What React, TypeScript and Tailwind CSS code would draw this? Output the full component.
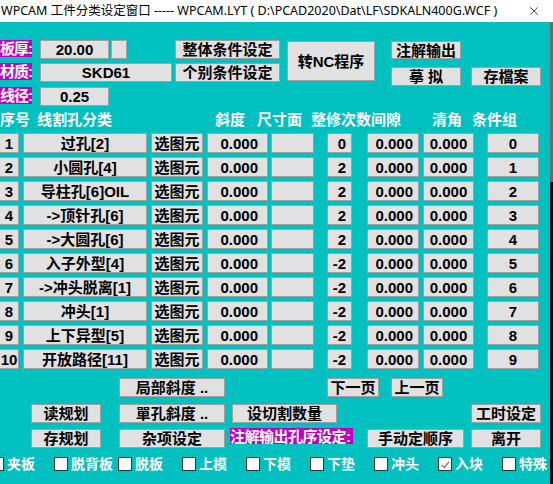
import { X } from 'lucide-react';

// WPCAM - 工件分类设定窗口 (classic Win32 dialog look)

const BOX = 'bg-[#e1e1e1] border border-[#a0a0a0] text-black font-bold flex items-center shrink-0 leading-none';
const LABEL = 'bg-[#c000c0] text-white font-bold flex items-center shrink-0 leading-none';

type Row = { no: number; name: string; k: number; grp: number };

const rows: Row[] = [
  { no: 1, name: '过孔[2]', k: 0, grp: 0 },
  { no: 2, name: '小圆孔[4]', k: 2, grp: 1 },
  { no: 3, name: '导柱孔[6]OIL', k: 2, grp: 2 },
  { no: 4, name: '->顶针孔[6]', k: 2, grp: 3 },
  { no: 5, name: '->大圆孔[6]', k: 2, grp: 4 },
  { no: 6, name: '入子外型[4]', k: -2, grp: 5 },
  { no: 7, name: '->冲头脱离[1]', k: -2, grp: 6 },
  { no: 8, name: '冲头[1]', k: -2, grp: 7 },
  { no: 9, name: '上下异型[5]', k: -2, grp: 8 },
  { no: 10, name: '开放路径[11]', k: -2, grp: 9 },
];

const checks = [
  { label: '夹板', on: false },
  { label: '脱背板', on: false },
  { label: '脱板', on: false },
  { label: '上模', on: false },
  { label: '下模', on: false },
  { label: '下垫', on: false },
  { label: '冲头', on: false },
  { label: '入块', on: true },
  { label: '特殊', on: false },
];

function Btn({ className = '', children }: { className?: string; children?: React.ReactNode }) {
  return <div className={`${BOX} justify-center h-[19px] ${className}`}>{children}</div>;
}

export default function App() {
  return (
    <div className="w-[553px] h-[484px] overflow-hidden font-['Liberation_Sans','Noto_Sans_CJK_SC',sans-serif] text-[15px]">
      {/* title bar */}
      <div className="h-[22px] bg-white flex items-center text-[12.5px] text-black">
        <span className="pl-[1px] font-['Noto_Sans','Noto_Sans_CJK_SC',sans-serif] whitespace-nowrap">
          WPCAM 工件分类设定窗口 ----- WPCAM.LYT ( D:\PCAD2020\Dat\LF\SDKALN400G.WCF )
        </span>
        <X className="ml-auto mr-[12px] w-[14px] h-[14px]" strokeWidth={1.2} />
      </div>

      <div className="flex h-[462px]">
        <div className="w-[550px] bg-[#00c0c0] flex flex-col">
          {/* top controls */}
          <div className="flex h-[88px] pt-[18px]">
            <div className="w-[172px] flex flex-col">
              <div className="flex h-[19px]">
                <div className={`${LABEL} w-[32px] h-[17px] tracking-[-1px]`}>板厚:</div>
                <div className={`${BOX} ml-[8px] w-[69px] h-[19px] justify-center`}>20.00</div>
                <div className={`${BOX} ml-[2px] w-[16px] h-[19px]`} />
              </div>
              <div className="flex h-[19px] mt-[4px]">
                <div className={`${LABEL} w-[32px] h-[17px] tracking-[-1px]`}>材质:</div>
                <div className={`${BOX} ml-[8px] w-[132px] h-[19px] justify-center`}>SKD61</div>
              </div>
              <div className="flex h-[19px] mt-[5px]">
                <div className={`${LABEL} w-[32px] h-[17px] tracking-[-1px]`}>线径:</div>
                <div className={`${BOX} ml-[8px] w-[69px] h-[19px] justify-center`}>0.25</div>
              </div>
            </div>
            <div className="ml-[3px] w-[105px] flex flex-col">
              <Btn className="w-[105px]">整体条件设定</Btn>
              <Btn className="w-[105px] mt-[4px]">个别条件设定</Btn>
            </div>
            <div className={`${BOX} justify-center ml-[7px] mt-[1px] w-[88px] h-[40px]`}>转NC程序</div>
            <div className="ml-[16px] w-[70px] flex flex-col">
              <div className={`${BOX} justify-center mt-[1px] w-[70px] h-[18px] border-[#0078d7]`}>注解输出</div>
              <Btn className="w-[70px] mt-[8px]">摹 拟</Btn>
            </div>
            <Btn className="ml-[10px] mt-[27px] w-[70px]">存檔案</Btn>
          </div>

          {/* header */}
          <div className="flex h-[23px] pt-[2px] text-white font-bold leading-none items-start">
            <span className="w-[30px] shrink-0">序号</span>
            <span className="ml-[7px] w-[75px] shrink-0">线割孔分类</span>
            <span className="ml-[103px] w-[30px] shrink-0">斜度</span>
            <span className="ml-[12px] w-[45px] shrink-0">尺寸面</span>
            <span className="ml-[9px] w-[90px] shrink-0">整修次数间隙</span>
            <span className="ml-[31px] w-[30px] shrink-0">清角</span>
            <span className="ml-[10px] w-[45px] shrink-0">条件组</span>
          </div>

          {/* table */}
          <div className="flex flex-col gap-[4px]">
            {rows.map((r) => (
              <div key={r.no} className="flex h-[20px] ml-[-1px]">
                <div className={`${BOX} w-[20px] h-[20px] justify-center`}>{r.no}</div>
                <div className={`${BOX} ml-[4px] w-[124px] h-[20px] justify-center`}>{r.name}</div>
                <div className={`${BOX} ml-[4px] w-[52px] h-[20px] justify-center`}>选图元</div>
                <div className={`${BOX} ml-[4px] w-[61px] h-[20px] justify-end pr-[9px]`}>0.000</div>
                <div className={`${BOX} ml-[3px] w-[43px] h-[20px]`} />
                <div className={`${BOX} ml-[13px] w-[25px] h-[20px] justify-end pr-[5px]`}>{r.k}</div>
                <div className={`${BOX} ml-[15px] w-[52px] h-[20px] justify-end pr-[5px]`}>0.000</div>
                <div className={`${BOX} ml-[4px] w-[51px] h-[20px] justify-center`}>0.000</div>
                <div className={`${BOX} ml-[13px] w-[52px] h-[20px] justify-center`}>{r.grp}</div>
              </div>
            ))}
          </div>

          {/* bottom buttons */}
          <div className="flex mt-[9px]">
            <Btn className="ml-[119px] w-[106px]">局部斜度 ..</Btn>
            <Btn className="ml-[102px] w-[52px]">下一页</Btn>
            <Btn className="ml-[12px] w-[52px]">上一页</Btn>
          </div>
          <div className="flex mt-[7px]">
            <Btn className="ml-[31px] w-[70px]">读规划</Btn>
            <Btn className="ml-[18px] w-[106px]">單孔斜度 ..</Btn>
            <Btn className="ml-[7px] w-[105px]">设切割数量</Btn>
            <Btn className="ml-[134px] w-[70px]">工时设定</Btn>
          </div>
          <div className="flex mt-[6px] items-start">
            <Btn className="ml-[31px] w-[70px]">存规划</Btn>
            <Btn className="ml-[18px] w-[106px]">杂项设定</Btn>
            <div className={`${LABEL} ml-[5px] mt-[-1px] w-[123px] h-[16px] whitespace-nowrap tracking-[-0.5px]`}>
              注解输出孔序设定:
            </div>
            <Btn className="ml-[14px] w-[97px]">手动定顺序</Btn>
            <Btn className="ml-[7px] w-[70px]">离开</Btn>
          </div>

          {/* checkboxes */}
          <div className="flex mt-[8px] ml-[-10px] h-[16px]">
            {checks.map((c) => (
              <div key={c.label} className="w-[64px] shrink-0 flex items-center text-white font-bold text-[14px] leading-none">
                <div className="w-[14px] h-[14px] bg-white border border-[#333333] flex items-center justify-center shrink-0">
                  {c.on && (
                    <svg viewBox="0 0 12 12" className="w-[11px] h-[11px]">
                      <path d="M2 6.5 L4.8 9.2 L10 2.8" fill="none" stroke="#777777" strokeWidth="1.4" />
                    </svg>
                  )}
                </div>
                <span className="ml-[3px] whitespace-nowrap">{c.label}</span>
              </div>
            ))}
          </div>
        </div>

        {/* neighbouring window edge */}
        <div className="w-[3px] flex flex-col">
          <div className="h-[160px] bg-[#6b6b6b]" />
          <div className="flex-1 bg-[#0a0a0a]" />
        </div>
      </div>
    </div>
  );
}
